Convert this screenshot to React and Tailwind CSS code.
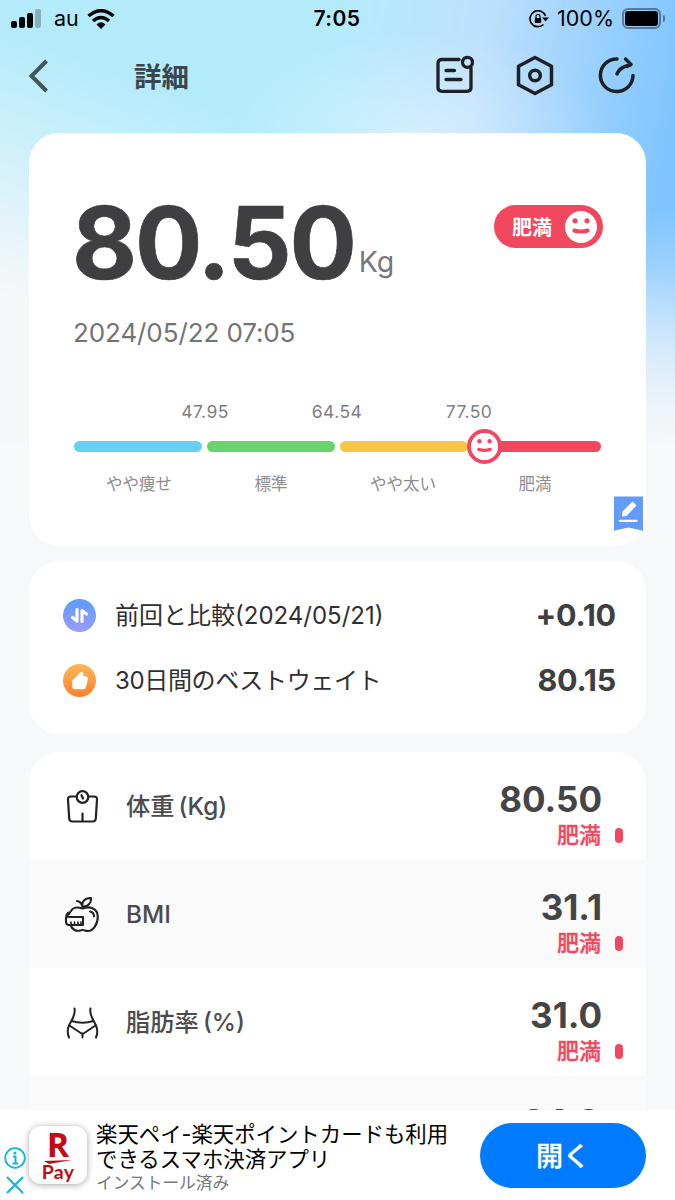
import clsx from "clsx";

const ranges = [
  { label: "やや痩せ", color: "bg-[#67d0f3]" },
  { label: "標準", color: "bg-[#69d36e]" },
  { label: "やや太い", color: "bg-[#f8c646]" },
  { label: "肥満", color: "bg-[#f1485f]" },
];

const limits = ["47.95", "64.54", "77.50"];

const metrics = [
  { name: "体重", unit: "(Kg)", value: "80.50", Icon: ScaleIcon },
  { name: "BMI", unit: "", value: "31.1", Icon: AppleIcon },
  { name: "脂肪率", unit: "(%)", value: "31.0", Icon: WaistIcon },
];

function ScaleIcon() {
  return (
    <svg className="mt-1" width="36" height="36" viewBox="0 0 36 36" fill="none" stroke="#222" strokeWidth="2.200" strokeLinecap="round">
      <path d="M12.500 6.500H7Q3.800 6.500 4 9.500L5.200 28.500Q5.400 31.500 8.400 31.500H28.600Q31.600 31.500 31.800 28.500L33 9.500Q33.200 6.500 30 6.500H24.500" />
      <circle cx="18.500" cy="7" r="5.800" />
      <path d="M17.500 5.200L19 8.500M18.500 23.500V31" />
    </svg>
  );
}

function AppleIcon() {
  return (
    <svg className="mt-px" width="36" height="36" viewBox="0 0 36 36" fill="none" stroke="#222" strokeWidth="2.100" strokeLinecap="round" strokeLinejoin="round">
      <path d="M7 14C8.500 10.500 13 9.500 18.500 11.500C25 9 33.500 10.500 33.800 19.500C34 27 29 34 24 34C21.500 34 20.500 33 18.500 33C16 33 14 35 10.500 33C8.500 32 7.500 30.500 6.500 28" />
      <path d="M5.500 16.500Q1.800 18.500 2 21.500V25Q2.200 28 5 28H19V20H5.500Q2 20 2.500 18Q4 15 6 15.500" />
      <path d="M7 27.500V25M10.500 27.500V25M14 27.500V25M17 27.500V25" strokeWidth="1.600" />
      <path d="M18.500 10C18 7 15.500 4.500 13 4M18.500 9.500C17.500 4 21 1 27 1C27.500 6 24 10 18.500 9.500ZM26 14.500Q30 15.500 30 19.500" />
    </svg>
  );
}

function WaistIcon() {
  return (
    <svg className="mt-1" width="36" height="36" viewBox="0 0 36 36" fill="none" stroke="#222" strokeWidth="2" strokeLinecap="round" strokeLinejoin="round">
      <path d="M10.500 2.500C12 9.500 7.500 13.500 5 19.500C3.300 23.500 3.500 28 5 31.500M26.500 2.500C25 9.500 29.500 13.500 32 19.500C33.700 23.500 33.500 28 32 31.500" />
      <path d="M7.500 15Q18.500 18.500 29.500 15M5.500 19.500L17.500 27.500H19.500L31.500 19.500M18.500 28V31.500" />
    </svg>
  );
}

function Face({ className }) {
  return (
    <svg viewBox="0 0 32 32" className={className}>
      <circle cx="16" cy="16" r="16" fill="white" />
      <circle cx="10" cy="9.800" r="2.600" fill="#f1485f" />
      <circle cx="22" cy="9.800" r="2.600" fill="#f1485f" />
      <path d="M9.300 19.500Q16 21.700 22.700 19.500" fill="none" stroke="#f1485f" strokeWidth="4" strokeLinecap="round" />
    </svg>
  );
}

function StatusBar() {
  return (
    <div className="grid h-[37px] grid-cols-3 items-center pl-[11px] pr-[10px] text-[21.500px] leading-none text-black">
      <div className="flex items-center">
        <div className="flex h-[19px] items-end gap-[2px]">
          <i className="h-[7px] w-[6px] rounded-[2px] bg-black" />
          <i className="h-[11px] w-[6px] rounded-[2px] bg-black" />
          <i className="h-[15px] w-[6px] rounded-[2px] bg-black" />
          <i className="h-[19px] w-[6px] rounded-[2px] bg-black/25" />
        </div>
        <span className="ml-[13px]">au</span>
        <svg className="ml-[8px]" width="28" height="20" viewBox="0 0 28 20" fill="none" stroke="black" strokeWidth="3.500">
          <path d="M1.500 7Q14 -3.500 26.500 7" />
          <path d="M6 12Q14 5 22 12" />
          <path d="M9.500 15.500Q14 11 18.500 15.500L14 20Z" fill="black" stroke="none" />
        </svg>
      </div>
      <div className="-ml-[2px] text-center text-[21px] font-semibold tracking-[0.500px]">7:05</div>
      <div className="flex items-center justify-end">
        <svg width="20" height="18" viewBox="0 0 20 18" fill="none" stroke="black" strokeWidth="1.700">
          <path d="M16.500 6A8 8 0 1 0 14.500 14.500" />
          <path d="M13 7.500H20L16.500 11.500Z" fill="black" stroke="none" />
          <rect x="5.800" y="8" width="6.400" height="5" rx="0.800" fill="black" stroke="none" />
          <path d="M7 8V6.300Q7 4.500 9 4.500T11 6.300V8" strokeWidth="1.200" />
        </svg>
        <span className="ml-[8px]">100%</span>
        <div className="ml-[8px] h-[21px] w-[39px] rounded-[6px] border-2 border-black/40 p-px">
          <div className="h-full w-full rounded-[3px] bg-black" />
        </div>
        <i className="ml-[2px] h-[7px] w-[2px] rounded-r bg-black/40" />
      </div>
    </div>
  );
}

function Header() {
  return (
    <header className="flex h-24 items-start pl-[28px] pt-[16px]">
      <svg className="mt-[6px]" width="20" height="34" viewBox="0 0 20 34" fill="none" stroke="#46545a" strokeWidth="4">
        <path d="M18.500 2L3.500 17L18.500 32" />
      </svg>
      <h1 className="ml-[86px] mt-[6px] text-[27.500px] font-bold leading-[36px] text-[#3a474c]">詳細</h1>
      <div className="ml-auto mr-[39px] flex gap-[41px] text-[#1d2125]">
        <svg width="40" height="40" viewBox="0 0 40 40" fill="none" stroke="currentColor" strokeWidth="3.300" strokeLinecap="round">
          <path d="M25 6.500H8Q4 6.500 4 10.500V34.500Q4 38.300 8 38.300H33Q37 38.300 37 34.500V15" />
          <circle cx="33.500" cy="9.300" r="5" />
          <path d="M12 17.500H20.500M12 26.500H27" />
        </svg>
        <svg className="overflow-visible" width="40" height="42" viewBox="0 0 40 42" fill="none" stroke="currentColor" strokeWidth="3.500" strokeLinejoin="round">
          <path d="M20 4.500L36.500 13.200V31.800L20 40.500L3.500 31.800V13.200Z" />
          <circle cx="20" cy="22.500" r="5.300" />
        </svg>
        <svg width="40" height="42" viewBox="0 0 40 42" fill="none" stroke="currentColor" strokeWidth="3.500" strokeLinecap="round" strokeLinejoin="round">
          <path d="M21 6A16.300 16.300 0 1 0 37 22.500" />
          <path d="M21 21Q24 13.500 34.500 12M29.500 6L35 11.500L31 13.500" />
        </svg>
      </div>
    </header>
  );
}

function SummaryCard() {
  return (
    <section className="relative h-[413px] rounded-[30px] bg-white px-[45px]">
      <div className="flex h-[178px] items-start justify-between pt-[46px]">
        <div className="flex items-start">
          <span className="-ml-[2px] mt-[2px] text-[100px] font-bold leading-[124px] tracking-[-2.200px] text-[#3f3f41] [-webkit-text-stroke:0.700px_#3f3f41]">80.50</span>
          <span className="ml-[4px] mt-[66px] text-[28.500px] leading-[34px] text-[#77777a]">Kg</span>
        </div>
        <div className="-mr-[2px] mt-[26px] flex h-[43px] w-[109px] items-center justify-between rounded-full bg-[#f1485f] pl-[18px] pr-[6px] text-xl font-bold text-white">
          <span className="mt-[2px]">肥満</span>
          <Face className="size-8" />
        </div>
      </div>
      <p className="-ml-px mt-[4px] text-[26px] leading-[36px] tracking-[-0.100px] text-[#737375]">2024/05/22 07:05</p>
      <div className="-ml-px mt-[50px] flex justify-center text-[17.500px] leading-[22px] tracking-[0.400px] text-[#808083]">
        {limits.map((limit) => (
          <span key={limit} className="w-[132px] text-center">{limit}</span>
        ))}
      </div>
      <div className="relative mt-[18px] flex gap-[5px]">
        {ranges.map((range) => (
          <div key={range.label} className={clsx("h-[11px] flex-1 rounded-full", range.color)} />
        ))}
        <div className="absolute -top-[12px] left-[393px] size-[35px] rounded-full border-[4px] border-[#f1485f] bg-white">
          <Face className="size-full" />
        </div>
      </div>
      <div className="-ml-px mt-[20px] flex text-[16.500px] leading-[24px] text-[#8e8e91]">
        {ranges.map((range) => (
          <span key={range.label} className="flex-1 text-center">{range.label}</span>
        ))}
      </div>
      <svg className="absolute bottom-[15px] right-[3px]" width="29" height="35" viewBox="0 0 29 35">
        <path d="M0 0.500H29V34.500Q28 35 26 34L14.500 31.500L3 34Q1 35 0 34.500Z" fill="#629bfa" />
        <path d="M8 20.500L8.500 15.500L18.500 5.500L22.500 9.500L12.500 20Z" fill="white" />
        <path d="M6 24.800H22.500" stroke="white" strokeWidth="2.300" strokeLinecap="round" />
      </svg>
    </section>
  );
}

function CompareCard() {
  return (
    <section className="mt-[15px] flex h-[173px] flex-col justify-center gap-px rounded-[30px] bg-white pl-[34px] pr-[30px] text-[#303032]">
      <div className="flex h-16 items-center">
        <svg width="33" height="33" viewBox="0 0 33 33">
          <defs>
            <linearGradient id="compare" x2="0" y2="1">
              <stop stopColor="#5b9bfd" />
              <stop offset="1" stopColor="#9a9cff" />
            </linearGradient>
          </defs>
          <circle cx="16.500" cy="16.500" r="16.500" fill="url(#compare)" />
          <path d="M14 10.500V22L9.500 18.500M19 22.500V11.500L23.500 15" fill="none" stroke="white" strokeWidth="3.200" strokeLinecap="round" strokeLinejoin="round" />
        </svg>
        <span className="ml-[19px] mt-[2px] text-[24px]">前回と比較(2024/05/21)</span>
        <b className="ml-auto text-[30.500px] font-bold tracking-[-0.200px] text-[#3f3f41]">+0.10</b>
      </div>
      <div className="flex h-16 items-center">
        <svg width="33" height="33" viewBox="0 0 33 33">
          <defs>
            <linearGradient id="best" x2="0" y2="1">
              <stop stopColor="#ffb657" />
              <stop offset="1" stopColor="#ff802f" />
            </linearGradient>
          </defs>
          <circle cx="16.500" cy="16.500" r="16.500" fill="url(#best)" />
          <path d="M10 16.500L13 14L17.500 9Q20.500 8 19.500 13H23Q24.500 13.500 24 15.500L22.500 22.500Q22 24.500 20 24.500H12Q10 24.500 10 22.500Z" fill="white" stroke="white" strokeWidth="1.500" strokeLinejoin="round" />
        </svg>
        <span className="ml-[19px] mt-[2px] text-[24px] tracking-[-0.350px]">30日間のベストウェイト</span>
        <b className="ml-auto text-[30.500px] font-bold tracking-[-0.200px] text-[#3f3f41]">80.15</b>
      </div>
    </section>
  );
}

function MetricList() {
  return (
    <section className="mt-[18px] h-[358px] overflow-hidden rounded-t-[30px] bg-white">
      {metrics.map(({ name, unit, value, Icon }) => (
        <div key={name} className="flex h-[108px] items-center pl-[35px] pr-[23px] even:bg-[#fafafa]">
          <Icon />
          <span className="ml-[26px] text-[24.300px] font-medium text-[#4b4b4d]">
            {name}
            {unit && <span className="ml-[4px]">{unit}</span>}
          </span>
          <div className="ml-auto flex flex-col items-end">
            <span className="mr-[21px] mt-[20px] text-[35px] font-bold leading-[38px] text-[#454547]">{value}</span>
            <span className="flex items-center gap-[14px] text-[22px] font-medium leading-[34px] text-[#f1485f]">
              <span className="[-webkit-text-stroke:0.350px_#f1485f]">肥満</span>
              <i className="h-[15px] w-2 rounded-full bg-[#f1485f]" />
            </span>
          </div>
        </div>
      ))}
      <div className="flex h-[108px] justify-end bg-[#fafafa] pr-[46px] pt-[27px] text-[35px] font-bold leading-[38px] text-[#454547]">
        24.8
      </div>
    </section>
  );
}

function AdBanner() {
  return (
    <aside className="relative flex h-[90px] items-start bg-white pl-[29px] text-black">
      <div className="absolute bottom-0 left-0 flex w-[29px] flex-col items-center gap-[7px] pb-[6px]">
        <svg width="22" height="22" viewBox="0 0 22 22" fill="none" stroke="#13b5d8" strokeWidth="1.800">
          <circle cx="11" cy="11" r="9.800" />
          <path d="M9 9.500H11.500V16M8.500 16.500H14" strokeWidth="2" />
          <circle cx="11" cy="6" r="1.500" fill="#13b5d8" stroke="none" />
        </svg>
        <svg width="18" height="18" viewBox="0 0 18 18" stroke="#13b5d8" strokeWidth="2.300">
          <path d="M1 1L17 17M17 1L1 17" />
        </svg>
      </div>
      <div className="mt-[16px] flex h-[58px] w-[58px] shrink-0 flex-col items-center rounded-[12px] bg-white text-[#c20b12] shadow-[0_1px_7px_rgba(0,0,0,0.35)]">
        <span className="mt-[5px] font-['Open_Sans'] text-[34px] font-bold leading-[27px]">R</span>
        <svg className="mt-[2px] shrink-0" width="28" height="4" viewBox="0 0 28 4">
          <path d="M0 1L28 0L5 4Z" fill="currentColor" />
        </svg>
        <span className="font-['Lato'] text-[19.500px] font-bold leading-[15px] tracking-[0.200px]">Pay</span>
      </div>
      <div className="ml-[9px] mt-[12px] whitespace-nowrap">
        <p className="text-[21.400px] leading-[25px]">楽天ペイ-楽天ポイントカードも利用<br />できるスマホ決済アプリ</p>
        <p className="text-[16.700px] leading-[22px] text-[#777]">インストール済み</p>
      </div>
      <button className="absolute right-[29px] top-[13px] h-[65px] w-[166px] rounded-full bg-[#007bff] pt-[3px] text-[27px] font-medium text-white [-webkit-text-stroke:0.350px_white]">
        開く
      </button>
    </aside>
  );
}

export default function App() {
  return (
    <div className="h-[1200px] w-[675px] overflow-hidden bg-[#f7f8fa] font-['Inter','Noto_Sans_CJK_JP',sans-serif]">
      <div className="h-[1110px] bg-[linear-gradient(to_bottom,transparent_210px,#f5f7f9_440px),linear-gradient(200deg,transparent_260px,#f6f7f8_510px),radial-gradient(ellipse_190px_110px_at_420px_140px,rgba(255,255,255,0.4),transparent),linear-gradient(100deg,#b4ebfb_0%,#b4ebfb_45%,#bde0fc_65%,#80c5ff_92%)] bg-[length:100%_443px] bg-no-repeat">
        <StatusBar />
        <Header />
        <main className="px-[29px]">
          <SummaryCard />
          <CompareCard />
          <MetricList />
        </main>
      </div>
      <AdBanner />
    </div>
  );
}
